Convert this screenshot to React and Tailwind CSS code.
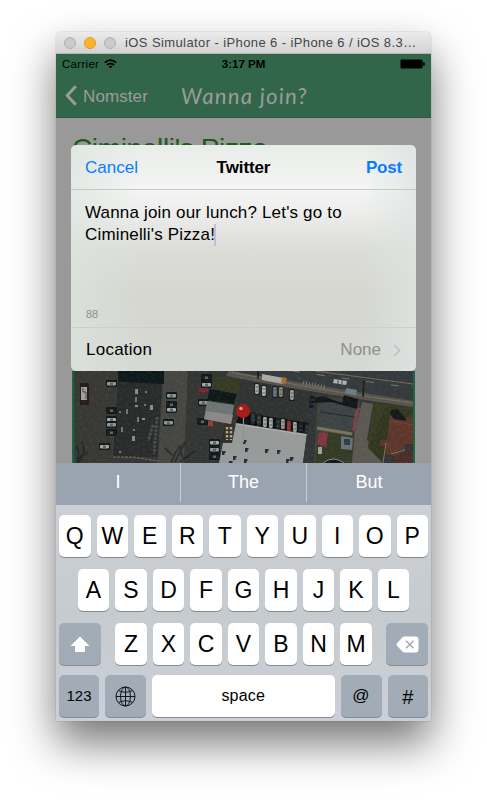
import React from "react";

const LETTER = "h-[42px] w-[31.5px] shrink-0 rounded-[5px] bg-white shadow-[0_1px_0_#868a90] flex items-center justify-center text-[23px] text-black pt-px";
const SPECIAL = "h-[42px] shrink-0 rounded-[5px] bg-[#a2acb7] shadow-[0_1px_0_#868a90] flex items-center justify-center text-black";

function Letters({ row }) {
  return (
    <div className="flex justify-center gap-[6px]">
      {row.split("").map((c) => (
        <div key={c} className={LETTER}>{c}</div>
      ))}
    </div>
  );
}

function TitleBar() {
  return (
    <div className="flex h-[22px] items-center rounded-t-[5px] border-b border-[#b4b4b4] bg-gradient-to-b from-[#ebebeb] to-[#d3d3d3] pl-2">
      <div className="flex gap-2">
        <span className="h-3 w-3 rounded-full border border-[#b0b0b0] bg-[#cbcbcb]" />
        <span className="h-3 w-3 rounded-full border border-[#dc9c2e] bg-[#fdb42b]" />
        <span className="h-3 w-3 rounded-full border border-[#b0b0b0] bg-[#cbcbcb]" />
      </div>
      <span className="ml-[9px] whitespace-nowrap pt-px text-[13px] tracking-[0.400px] text-[#454545]">iOS Simulator - iPhone 6 - iPhone 6 / iOS 8.3…</span>
    </div>
  );
}

function StatusBar() {
  return (
    <div className="grid h-5 grid-cols-3 items-center pl-[6px] pr-[6px] text-[11.5px] leading-5 text-black">
      <div className="flex items-center gap-[5px]">
        <span className="tracking-[0.300px]">Carrier</span>
        <svg width="13" height="10" viewBox="0 0 13 10" fill="none" stroke="#000" strokeWidth="1.7">
          <path d="M.8 3.6Q6.5 -1.4 12.2 3.6" />
          <path d="M2.9 6Q6.5 3 10.1 6" />
          <path d="M4.6 7.3Q6.5 6 8.4 7.3L6.5 9.4Z" fill="#000" stroke="none" />
        </svg>
      </div>
      <span className="text-center font-bold">3:17 PM</span>
      <div className="flex items-center justify-end">
        <span className="h-[10px] w-[23px] rounded-[2px] border border-[#143a25] bg-black" />
        <span className="h-[4px] w-[2px] rounded-r bg-black" />
      </div>
    </div>
  );
}

const PARKED = [
  [107, 382], [107, 409], [107, 418], [107, 423], [107, 431], [100, 445], [167, 394], [167, 403], [167, 408], [164, 421], [202, 376], [202, 383], [199, 401], [198, 420], [210, 441], [210, 448], [210, 455],
];
const LOT = [
  [255, 384, "#a4a9a6"], [262, 386, "#b2b5b2"], [273, 387, "#68717a"], [279, 387, "#8b8471"], [290, 390, "#999c9b"], [251, 413, "#23303a"], [257, 415, "#303433"], [263, 417, "#a4a5a0"], [269, 418, "#a1a8a9"], [276, 419, "#20282f"], [281, 419, "#969893"], [287, 421, "#a6232b"], [293, 422, "#a3a39e"], [299, 423, "#15181d"], [305, 424, "#20272b"], [310, 397, "#11161d"],
];
const VENTS = [[135, 389], [145, 391], [135, 397], [135, 405], [126, 409], [144, 404], [150, 405], [119, 411], [137, 417], [142, 418], [121, 427], [133, 429], [132, 436], [119, 451]];

// Drawn in window coordinates; only the lower 92px show beneath the sheet.
function SatelliteMap() {
  return (
    <svg className="block h-[92px] w-[339px]" viewBox="74 371 339 92">
      <defs>
        <filter id="grain" x="0" y="0" width="1" height="1">
          <feTurbulence type="fractalNoise" baseFrequency="0.35" numOctaves="3" seed="7" />
          <feColorMatrix values="0 0 0 0 0.45  0 0 0 0 0.45  0 0 0 0 0.42  0.9 0 0 0 -0.36" />
        </filter>
      </defs>
      <rect x="74" y="371" width="339" height="92" fill="#343533" />
      <path d="M164 371H188L184 463H158Z" fill="#454542" />
      <path d="M188 371H211L206 463H184Z" fill="#323534" />
      <path d="M74 371H117L113 463H74Z" fill="#373734" />
      {/* flat-roofed building */}
      <path d="M117 382H163L158 458H112Z" fill="#292b2b" stroke="#4b4941" strokeWidth=".7" />
      <path d="M118 371H164V384L118 382Z" fill="#0d181b" />
      <path d="M157 417L154 454M153 425l-5 16" stroke="#454a4a" strokeWidth="3" strokeDasharray="3 1" />
      {VENTS.map(([x, y], i) => (
        <rect key={i} x={x} y={y} width={i % 3 ? 2 : 3} height={i % 2 ? 2 : 5} fill={i % 3 ? "#6f7671" : "#819090"} />
      ))}
      <rect x="80" y="383" width="9" height="22" fill="#251c1a" />
      <rect x="81" y="387" width="6" height="13" fill="#a1a09f" />
      <path d="M83 388v4h3v7" stroke="#424749" fill="none" />
      {PARKED.map(([x, y], i) => (
        <g key={i}>
          <rect x={x - 1} y={y - 2} width="11" height="7" rx="1" fill="#111719" />
          <rect x={x} y={y} width="9" height="3.5" rx="1" fill={["#8e9998", "#171d20", "#a8aaa6"][i % 3]} />
          <rect x={x + 3} y={y + .5} width="3" height="2.5" fill="#5b666a" />
        </g>
      ))}
      {/* grass and sheds */}
      <path d="M215 376L240 381 238 393 212 388Z" fill="#353b20" />
      <path d="M210 389L237 394 234 404 207 400Z" fill="#0e1717" />
      <path d="M207 401L234 405 231 424 204 419Z" fill="#6d7474" />
      <path d="M206 411L233 415 231 424 204 419Z" fill="#898884" />
      <path d="M199 388h9v4h-10z" fill="#7c2530" />
      <path d="M208 421h5v5h-5z" fill="#943c3e" />
      <path d="M225 424L233 425 231 442 221 442Z" fill="#302b23" />
      <path d="M227 427v13M231 427v13" stroke="#aca48c" strokeWidth="2.5" strokeDasharray="2.5 1.5" />
      {/* parking lot */}
      <path d="M240 380L314 393 306 434 236 424Z" fill="#303231" />
      <path d="M240 412L309 423 306 433 236 424Z" fill="#080e10" />
      {LOT.map(([x, y, c], i) => (
        <g key={i}>
          <rect x={x - .6} y={y - 1} width="5" height="12" rx="1" fill="#131a1c" />
          <rect x={x} y={y} width="3.8" height="10" rx="1.4" fill={c} />
          <path d={`M${x + .5} ${y + 3}h3M${x + .5} ${y + 7}h3`} stroke="#50585a" strokeWidth=".9" />
        </g>
      ))}
      {/* white roof */}
      <path d="M236 423L307 434 303 463H219L223 443H232Z" fill="#989a9a" />
      <path d="M236 424L307 435" stroke="#b0b0aa" strokeWidth="1.2" />
      {[[243, 440], [245, 448], [265, 449], [277, 450], [290, 457], [286, 459], [233, 456], [222, 451], [244, 459], [229, 461]].map(([x, y], i) => (
        <path key={i} d={`M${x} ${y}h3.500v2h-1v2h-2.500z`} fill="#292936" />
      ))}
      <path d="M307 433L317 392 326 395 316 463H303Z" fill="#303434" />
      {/* road */}
      <path d="M225 371H413V401L240 379Z" fill="#34393b" />
      <path d="M229 371Q320 386 413 401V407Q320 394 226 376Z" fill="#57544b" />
      <path d="M232 372Q320 391 413 403" stroke="#757167" strokeWidth=".9" fill="none" />
      <path d="M315 371L413 384" stroke="#807052" strokeWidth=".9" />
      <path d="M292 371L413 388" stroke="#6f7574" strokeWidth="1" strokeDasharray="8 17" />
      <path d="M303 383L325 387" stroke="#77776f" strokeWidth="4" strokeDasharray="1 2" />
      <path d="M262 374L284 378 283 384 262 380Z" fill="#aaa9a2" />
      <path d="M282 377l5 1-1 6-5-1z" fill="#a26d35" />
      <path d="M334 379l13 2-1 4-13-2z" fill="#adb1af" />
      <path d="M338 380v4M342 380v4" stroke="#42494a" />
      <path d="M346 388l11 2-1 5-11-2z" fill="#67808a" />
      <path d="M364 381l-1 16M258 371v8" stroke="#121719" strokeWidth="1.5" />
      {/* lawns, houses and drive */}
      <path d="M318 396L360 401 354 463H314Z" fill="#424238" />
      <path d="M318 432L354 435 352 463H315Z" fill="#343a24" />
      <path d="M362 402L373 404 367 440 382 463H352L355 431Z" fill="#5a5850" />
      <path d="M374 403L413 409V430L382 452 368 447Z" fill="#373c21" />
      <path d="M386 406L413 411 397 425 388 451 380 460 368 448Z" fill="#30361e" />
      <path d="M322 399L356 405 353 431 318 425Z" fill="#3b4345" />
      <path d="M320 412L355 417" stroke="#20292c" />
      <path d="M356 407l4 1-5 23-3-1z" fill="#79404b" />
      <path d="M315 398L323 396 342 403 344 395 358 399 357 409 331 402 315 403Z" fill="#10171a" />
      <path d="M317 428L352 434" stroke="#777365" strokeWidth="3" />
      <path d="M319 432l9 1-2 14-9-3z" fill="#803640" />
      <path d="M341 436l12 2-1 12-11-1z" fill="#667078" />
      <path d="M344 439h6v6h-6z" fill="#313b44" />
      <path d="M318 447h4v7h-4z" fill="#a1a29e" />
      <path d="M323 463Q333 455 344 463" fill="#151916" stroke="#8a8b83" />
      <path d="M390 414L413 419V444H405V450H399V455H386V446H380V440H387Z" fill="#5e352b" />
      <path d="M390 421L413 425" stroke="#704437" strokeWidth="1.2" />
      <path d="M391 410l6-1 7 7 3 5-13-2-4-5z" fill="#121918" />
      <path d="M396 455h8v-4h9v12h-19z" fill="#4d2c26" />
      <path d="M386 443l-3 20M405 450l-14 4" stroke="#80745d" />
      {/* bare trees */}
      <path d="M77 463q4-9-1-18M78 463q9-8 4-22M77 459l11-7M171 463q5-14 10-17M175 462l10-20M180 462l15-11M172 455l-7-7M183 458l-4-12" stroke="#171b1a" strokeWidth="1.8" fill="none" opacity=".6" />
      <path d="M113 457h20l25 4" stroke="#65594a" strokeWidth="1.5" strokeDasharray="3 1" fill="none" />
      <rect x="74" y="371" width="339" height="92" filter="url(#grain)" opacity=".22" />
      {/* pin */}
      <path d="M243.500 416V442" stroke="#8f9293" strokeWidth="1.2" />
      <circle cx="243" cy="411" r="7" fill="#a81d1a" />
      <circle cx="241" cy="408.500" r="1.7" fill="#d2a19d" />
    </svg>
  );
}

function ShareSheet() {
  return (
    <div className="absolute left-[15px] top-[27px] flex h-[226px] w-[345px] flex-col overflow-hidden rounded-[5px] bg-[#dadbd6] bg-[linear-gradient(90deg,rgba(220,228,222,0.7),transparent_20%,transparent_85%,rgba(222,228,226,0.8)),linear-gradient(180deg,#e9ede9_0px,#f4f5f4_44px,#eeefed_65px,#dcddd8_105px,#d5d6d0_150px,#d6d8d4_226px)] text-[17px] text-black">
      <div className="flex h-[45px] shrink-0 items-center justify-between border-b border-[#c4c8c6] px-[14px] pt-[2px]">
        <span className="w-[80px] text-[#0a7cff]">Cancel</span>
        <span className="font-bold tracking-[-0.100px]">Twitter</span>
        <span className="w-[80px] text-right font-bold tracking-[-0.200px] text-[#0a7cff]">Post</span>
      </div>
      <div className="flex flex-1 flex-col justify-between px-[14px] pb-[6px] pt-[12px]">
        <p className="leading-[22px] tracking-[0.170px]">
          Wanna join our lunch? Let's go to<br />
          Ciminelli's Pizza!<span className="-ml-px inline-block h-[22px] w-[2px] bg-[#bcc0dc] align-bottom" />
        </p>
        <span className="pl-px text-[11px] leading-[14px] text-[#8d8f8c]">88</span>
      </div>
      <div className="flex h-[44px] items-center border-t border-[#cccfca] pl-[15px] pr-[15px] pt-px">
        <span className="flex-1 tracking-[0.250px]">Location</span>
        <span className="text-[#8e8e92]">None</span>
        <svg className="ml-[12px]" width="8" height="13" viewBox="0 0 8 13" fill="none" stroke="#c3c5c8" strokeWidth="1.8"><path d="M1 .8L6.700 6.500 1 12.200" /></svg>
      </div>
    </div>
  );
}

function Keyboard() {
  return (
    <div className="flex h-[216px] flex-col gap-3 bg-gradient-to-b from-[#cbd0d6] via-[#c6cbcf] to-[#cbd0d8] px-[3px] pt-[10px]">
      <Letters row="QWERTYUIOP" />
      <Letters row="ASDFGHJKL" />
      <div className="flex justify-between">
        <div className={SPECIAL + " w-[42px]"}>
          <svg width="20" height="17" viewBox="0 0 20 17" fill="#fff"><path d="M10 .5L19.500 10H15V15a1 1 0 0 1-1 1H6a1 1 0 0 1-1-1V10H.5Z" /></svg>
        </div>
        <Letters row="ZXCVBNM" />
        <div className={SPECIAL + " w-[42px]"}>
          <svg width="23" height="17" viewBox="0 0 23 17"><path d="M1 7.300L6.300 1.500Q7.200.5 8.500.5H19.500Q22.500.5 22.500 3.500V13.500Q22.500 16.500 19.500 16.500H8.500Q7.200 16.500 6.300 15.500L1 9.700Q0 8.500 1 7.300Z" fill="#fff" /><path d="M10 4.700L17.500 12.300M17.500 4.700L10 12.300" stroke="#a2acb7" strokeWidth="1.500" /></svg>
        </div>
      </div>
      <div className="-mt-[2px] flex gap-[6px]">
        <div className={SPECIAL + " w-[40px] pt-px text-[15px]"}>123</div>
        <div className={SPECIAL + " w-[41px]"}>
          <svg width="21" height="21" viewBox="0 0 21 21" fill="none" stroke="#111820" strokeWidth="1"><circle cx="10.500" cy="10.500" r="9.500" /><ellipse cx="10.500" cy="10.500" rx="5" ry="9.500" /><path d="M10.500 1V20M1 10.500H20M3.300 4.500Q10.500 8 17.700 4.500M3.300 16.500Q10.500 13 17.700 16.500" /></svg>
        </div>
        <div className="flex h-[42px] flex-1 items-center justify-center rounded-[5px] bg-white text-[16px] tracking-[0.200px] shadow-[0_1px_0_#868a90]">space</div>
        <div className={SPECIAL + " w-[41px] text-[17px]"}>@</div>
        <div className={SPECIAL + " w-[40.5px] pt-px text-[20px]"}>#</div>
      </div>
    </div>
  );
}

export default function App() {
  return (
    <div className="h-[801px] w-[487px] overflow-hidden bg-white pl-[56px] pt-[32px] font-['Liberation_Sans',Arial,sans-serif]">
      <div className="w-[375px] rounded-t-[5px] shadow-[0_0_1px_rgba(0,0,0,0.5),0_22px_44px_rgba(0,0,0,0.54)]">
        <TitleBar />
        <header className="h-16 bg-[#31664a]">
          <StatusBar />
          <div className="flex h-11 items-center border-b border-[#2b5941] pl-[9px] text-[#9c9c9c]">
            <div className="flex w-[116px] items-center gap-[6px] text-[17px]">
              <svg width="12" height="21" viewBox="0 0 12 21" fill="none" stroke="#9c9c9c" strokeWidth="3"><path d="M10.800 1.200L2.200 10.500 10.800 19.800" /></svg>
              <span className="pt-[2px] tracking-[0.100px]">Nomster</span>
            </div>
            <span className="origin-left skew-x-[4deg] whitespace-nowrap pb-px font-['Noteworthy','Lato',cursive] text-[22px] italic tracking-[1.300px]">Wanna join?</span>
          </div>
        </header>
        <main className="relative flex h-[345px] flex-col overflow-hidden bg-[#999]">
          <h1 className="ml-[16px] mt-[13px] h-[36px] shrink-0 text-[28px] leading-[36px] tracking-[-0.350px] text-[#1a5c1a]">Ciminelli's Pizza</h1>
          <div className="mx-[16px] mt-auto shrink-0 border-x-2 border-[#1b6543]">
            <SatelliteMap />
          </div>
          <ShareSheet />
        </main>
        <div className="grid h-[42px] grid-cols-[125px_126px_124px] divide-x divide-[#cbd0d6] bg-[#9aa3b0] pb-[3px] text-center text-[18px] leading-[39px] text-white">
          <span>I</span>
          <span>The</span>
          <span>But</span>
        </div>
        <Keyboard />
      </div>
    </div>
  );
}
